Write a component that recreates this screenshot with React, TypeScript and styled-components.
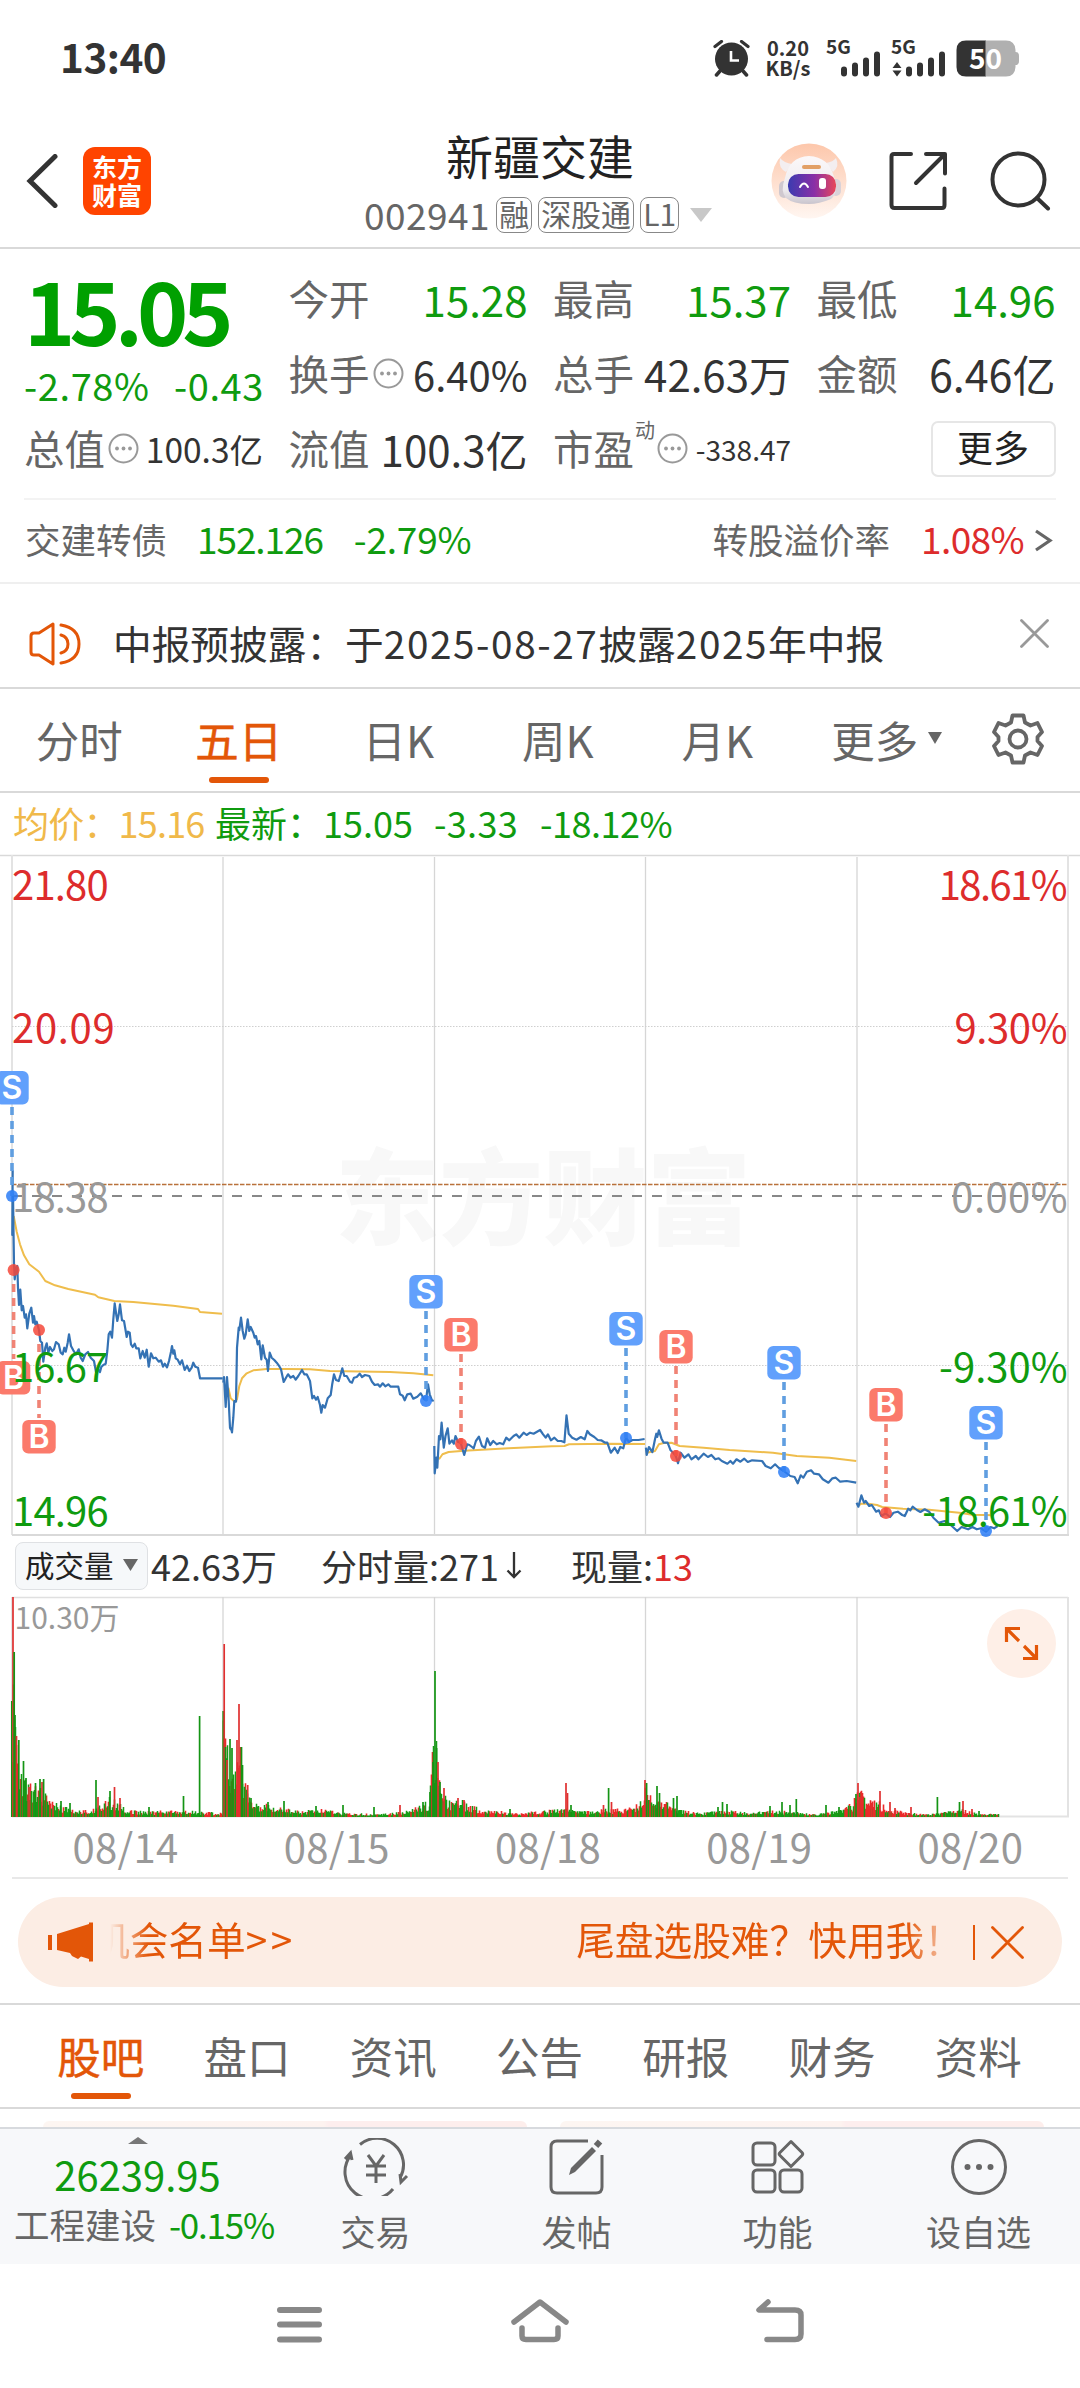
import React from "react";
import styled, { createGlobalStyle } from "styled-components";

const GREEN = "#0f9b0f";
const RED = "#dd2c2c";
const ORANGE = "#e35608";
const GREY = "#666";
const INK = "#333";
const LINE = "#d9d9d9";

const Global = createGlobalStyle`
  * { box-sizing: border-box; }
  body { margin: 0; background: #fff; }
  svg { display: block; flex: none; }
`;

const Screen = styled.main`
  width: 1080px;
  height: 2388px;
  display: flex;
  flex-direction: column;
  overflow: hidden;
  background: #fff;
  color: ${INK};
  font-family: "Noto Sans CJK SC", "Liberation Sans", sans-serif;
  line-height: 1;
  white-space: nowrap;
`;

/* ---------- status bar ---------- */

const StatusBar = styled.div`
  height: 116px;
  display: flex;
  align-items: center;
  justify-content: space-between;
  padding: 0 61px 0 60px;
`;
const Clock = styled.div`
  padding-bottom: 3px;
  font-size: 40.5px;
  font-weight: 700;
  letter-spacing: -0.5px;
`;
const StatusIcons = styled.div`
  display: flex;
  align-items: center;
`;
const NetSpeed = styled.div`
  width: 50px;
  margin: -1px 14px 0 12px;
  text-align: center;
  font: 700 20px/20px "Noto Sans CJK SC", sans-serif;
`;
const Signal = styled.div<{ $gap: number }>`
  margin-right: ${(p) => p.$gap}px;
`;
const GlyphSvg = styled.svg`
  overflow: visible;
`;

/* ---------- header ---------- */

const Header = styled.header`
  height: 133px;
  display: grid;
  grid-template-columns: 320px 440px 320px;
  border-bottom: 2px solid ${LINE};
`;
const HeaderLeft = styled.div`
  display: flex;
  align-items: center;
  gap: 25px;
  padding: 0 0 2px 26px;
`;
const Logo = styled.div`
  width: 68px;
  height: 68px;
  border-radius: 12px;
  background: #ff4400;
  color: #fff;
  font-size: 25px;
  font-weight: 700;
  line-height: 28px;
  text-align: center;
  padding-top: 5px;
`;
const HeaderTitle = styled.div`
  display: flex;
  flex-direction: column;
  align-items: center;
`;
const StockName = styled.h1`
  margin: 15px 0 0;
  font-size: 47px;
  font-weight: 400;
  line-height: 47px;
  color: #222;
`;
const CodeRow = styled.div`
  display: flex;
  align-items: center;
  gap: 6px;
  height: 36px;
  margin-top: 19px;
  margin-left: -4px;
`;
const Code = styled.span`
  padding-bottom: 2px;
  font-size: 37px;
  color: ${GREY};
  letter-spacing: 0.5px;
`;
const Tag = styled.span`
  height: 36px;
  padding: 0 2px;
  border: 1.5px solid #888;
  border-radius: 8px;
  font-size: 30px;
  line-height: 31px;
  color: ${GREY};
`;
const CodeArrow = styled.span`
  margin-left: 5px;
`;
const HeaderRight = styled.div`
  display: flex;
  align-items: center;
  padding: 0 29px 1px 11px;
  justify-content: space-between;
`;

/* ---------- quote ---------- */

const Quote = styled.section`
  height: 251px;
  margin: 0 24px;
  padding-top: 12px;
  display: grid;
  grid-template-columns: 239px 239px 238px 239px;
  grid-template-rows: 75px 75px 75px;
  column-gap: 25.5px;
  border-bottom: 2px solid #f3f3f3;
`;
const PriceBlock = styled.div`
  grid-row: span 2;
  color: ${GREEN};
`;
const Price = styled.div`
  margin-top: 4px;
  font-size: 87px;
  font-weight: 700;
  line-height: 87px;
  letter-spacing: -6px;
  color: #00a000;
`;
const Change = styled.div`
  display: flex;
  justify-content: space-between;
  margin: 13px -1px 0 0;
  font-size: 38px;
  line-height: 40px;
  letter-spacing: 0.6px;
`;
const Metric = styled.div`
  display: flex;
  align-items: center;
  justify-content: space-between;
`;
const MetricLabel = styled.span`
  display: flex;
  align-items: center;
  gap: 3px;
  font-size: 40.5px;
  color: ${GREY};
`;
const MetricValue = styled.span<{ $color?: string; $size?: number }>`
  font-size: ${(p) => p.$size ?? 42}px;
  color: ${(p) => p.$color ?? INK};
`;
const Raised = styled.sup`
  align-self: flex-start;
  margin: -8px -1px 0 -2px;
  font-size: 20px;
  line-height: 20px;
`;
const MoreButton = styled.button`
  justify-self: end;
  align-self: center;
  width: 125px;
  height: 56px;
  padding: 0 0 6px;
  border: 2px solid #e6e6e6;
  border-radius: 7px;
  background: #fff;
  color: #222;
  font: 400 36px/1 "Noto Sans CJK SC", sans-serif;
`;
const BondRow = styled.section`
  height: 84px;
  display: flex;
  align-items: center;
  padding: 0 26px 5px 25px;
  font-size: 35.5px;
  color: ${GREY};
  border-bottom: 2px solid #efefef;
`;
const BondValue = styled.span<{ $color: string; $left: number; $track?: number }>`
  margin-left: ${(p) => p.$left}px;
  font-size: 37px;
  letter-spacing: ${(p) => p.$track ?? 0}px;
  color: ${(p) => p.$color};
`;
const BondArrow = styled.div`
  padding-top: 4px;
  margin-left: 4px;
`;
const Spacer = styled.div`
  flex: 1;
`;

/* ---------- notice ---------- */

const Notice = styled.section`
  height: 105px;
  display: flex;
  align-items: center;
  padding: 17px 31px 0 28px;
  border-bottom: 2px solid ${LINE};
  font-size: 38.7px;
`;
const NoticeText = styled.span`
  margin: -4px 0 0 31px;
  flex: 1;
`;
const Wide = styled.span`
  letter-spacing: 1.6px;
`;
const NoticeClose = styled.div`
  align-self: flex-start;
  margin-top: 18px;
`;

/* ---------- tabs ---------- */

const Tabs = styled.nav<{ $pad: number }>`
  height: 104px;
  display: flex;
  padding: 0 ${(p) => p.$pad}px;
  border-bottom: 2px solid ${LINE};
`;
const Tab = styled.div<{ $active?: boolean; $shift?: number }>`
  flex: 1 1 0;
  min-width: 0;
  display: flex;
  flex-direction: column;
  align-items: center;
  justify-content: flex-end;
  gap: 12px;
  padding: 0 0 8px ${(p) => p.$shift ?? 0}px;
  font-size: 43.5px;
  color: ${(p) => (p.$active ? ORANGE : GREY)};
  -webkit-text-stroke: ${(p) => (p.$active ? "0.5px" : "0")};
  &::after {
    content: "";
    width: 60px;
    height: 6px;
    border-radius: 3px;
    background: ${(p) => (p.$active ? ORANGE : "transparent")};
  }
`;
const TabLabel = styled.div<{ $indent?: number }>`
  display: flex;
  align-items: center;
  gap: 10px;
  height: 50px;
  margin-left: ${(p) => p.$indent ?? -1}px;
`;
const TabArrow = styled.span`
  padding-bottom: 4px;
`;
const GearTab = styled.div`
  width: 123px;
  padding: 24px 0 0 35px;
`;

/* ---------- chart ---------- */

const Legend = styled.div`
  height: 62px;
  display: flex;
  align-items: center;
  padding: 0 0 5px 13px;
  font-size: 36px;
  color: ${GREEN};
`;
const LegendItem = styled.span<{ $color?: string; $width: number; $track?: number }>`
  width: ${(p) => p.$width}px;
  letter-spacing: ${(p) => p.$track ?? 0}px;
  color: ${(p) => p.$color ?? GREEN};
`;
const ChartSvg = styled.svg`
  overflow: visible;
  font-family: "Noto Sans CJK SC", "Liberation Sans", sans-serif;
`;
const VolumeBar = styled.div`
  height: 62px;
  display: flex;
  align-items: center;
  padding: 0 0 0 15px;
  font-size: 36px;
`;
const IndicatorPill = styled.div`
  display: flex;
  align-items: center;
  gap: 9px;
  width: 133px;
  height: 48px;
  margin-right: 3px;
  padding: 0 0 2px 9px;
  border: 1px solid #dfe1e4;
  border-radius: 8px;
  background: #f6f8fa;
  color: #222;
  font-size: 29.5px;
`;
const VolumeItem = styled.span<{ $width: number }>`
  display: flex;
  align-items: center;
  gap: 7px;
  width: ${(p) => p.$width}px;
  padding-bottom: 2px;
`;
const Up = styled.span`
  margin-left: -7px;
  color: ${RED};
`;
const VolumeArea = styled.div`
  position: relative;
  height: 221px;
`;
const ExpandButton = styled.div`
  position: absolute;
  right: 24px;
  top: 12px;
  width: 69px;
  height: 69px;
  border-radius: 50%;
  background: #feefe7;
  display: grid;
  place-items: center;
`;
const Dates = styled.div`
  height: 61px;
  margin: 0 12px;
  display: grid;
  grid-template-columns: repeat(5, 1fr);
  align-items: center;
  padding-bottom: 3px;
  border-bottom: 2px solid #e8e8e8;
  text-align: center;
  font-size: 40px;
  letter-spacing: 0.3px;
  color: #999;
`;
const DateCell = styled.span`
  padding-left: 16px;
`;

/* ---------- banner ---------- */

const BannerWrap = styled.div`
  height: 126px;
  padding: 18px 18px 0;
  border-bottom: 2px solid ${LINE};
`;
const Banner = styled.div`
  height: 90px;
  border-radius: 45px;
  background: #fcede4;
  display: flex;
  align-items: center;
  padding: 0 38px 0 30px;
  color: ${ORANGE};
  font-size: 38.7px;
`;
const Marquee = styled.div`
  width: 837px;
  margin-left: 16px;
  height: 60px;
  padding-bottom: 7px;
  display: flex;
  justify-content: space-between;
  align-items: center;
  overflow: hidden;
  mask-image: linear-gradient(90deg, transparent 0px, #000 38px, #000 796px, transparent 850px);
`;
const MarqueeTail = styled.span`
  margin-left: -19px;
`;
const Chevrons = styled.span`
  letter-spacing: 3.5px;
`;
const MarqueeHead = styled.span`
  margin-right: -17px;
`;
const BannerDivider = styled.div`
  width: 2px;
  height: 35px;
  margin: 0 16px 0 27px;
  background: ${ORANGE};
`;

/* ---------- feed peek + bottom bar ---------- */

const FeedPeek = styled.div`
  height: 18px;
  display: flex;
  align-items: flex-end;
  justify-content: space-between;
  padding: 0 36px 0 43px;
`;
const FeedCard = styled.div`
  width: 484px;
  height: 6px;
  border-radius: 14px 14px 0 0;
  background: linear-gradient(90deg, #fdf6f2 0, #fdf3f0 58%, #fdeeee 59%, #fdeeec 100%);
`;
const BottomBar = styled.footer`
  height: 137px;
  display: grid;
  grid-template-columns: 275px repeat(4, 201px);
  background: #f7f8fa;
  border-top: 2px solid #d7dade;
`;
const IndexBlock = styled.div`
  display: flex;
  flex-direction: column;
  align-items: center;
  padding-top: 8px;
`;
const IndexValue = styled.div`
  margin-top: 8px;
  font-size: 40px;
  line-height: 44px;
  color: ${GREEN};
`;
const IndexName = styled.div`
  display: flex;
  gap: 13px;
  margin: 8px 0 0 13px;
  font-size: 35.5px;
  line-height: 40px;
  color: ${GREY};
`;
const IndexChange = styled.span`
  font-size: 35px;
  color: ${GREEN};
  letter-spacing: -1.2px;
`;
const Action = styled.div`
  display: flex;
  flex-direction: column;
  align-items: center;
  padding-top: 9px;
  gap: 17px;
  font-size: 35px;
  color: ${GREY};
`;
const SystemNav = styled.nav`
  flex: 1;
  display: flex;
  justify-content: center;
  padding-top: 33px;
  gap: 182px;
`;

/* ---------- data ---------- */

type Pt = [number, number];

/* Early sessions are digitised on a 3x grid, the later ones on a 2.306 x 3 grid. */
const early = (p: Pt[]) => p.map(([x, y]) => `${(x / 3).toFixed(1)},${(1160 + y / 3).toFixed(1)}`).join(" ");
const late = (p: Pt[]) => p.map(([x, y]) => `${(400 + x / 2.306).toFixed(1)},${(1240 + y / 3).toFixed(1)}`).join(" ");

const price: string[] = [
  early([[38,28],[37,222],[39,100],[41,250],[42,310],[44,355],[48,320],[52,315],[54,380],[57,432],[61,386],[65,448],[69,435],[74,470],[78,460],[82,502],[88,458],[94,440],[99,485],[102,465],[106,490],[110,482],[117,507],[121,540],[126,545],[130,602],[136,560],[140,547],[145,575],[150,558],[157,570],[162,565],[168,543],[176,550],[182,575],[188,580],[193,560],[197,572],[203,545],[207,520],[213,555],[220,568],[228,580],[236,565],[242,590],[248,600],[256,580],[264,573],[272,590],[282,600],[288,633],[294,625],[300,633],[304,618],[310,612],[317,608],[322,570],[326,520],[331,512],[336,530],[340,475],[344,427],[349,462],[352,480],[356,460],[360,430],[366,478],[372,480],[378,515],[380,528],[384,512],[389,515],[393,550],[398,558],[404,548],[409,562],[416,562],[421,592],[428,570],[434,590],[440,566],[446,617],[453,577],[460,592],[467,590],[476,602],[483,598],[489,617],[494,608],[501,619],[507,600],[513,572],[516,555],[520,578],[523,568],[527,592],[533,596],[540,610],[546,598],[554,627],[561,614],[568,630],[575,620],[580,605],[586,617],[594,620],[600,652],[668,652]]),
  early([[670,665],[672,648],[677,738],[681,648],[686,720],[690,800],[692,805],[694,803],[696,814],[700,770],[703,720],[708,722],[711,560],[716,500],[718,508],[723,470],[728,510],[733,533],[737,520],[743,475],[748,510],[752,498],[760,515],[764,530],[768,525],[773,550],[778,540],[784,595],[788,553],[795,590],[800,596],[804,630],[809,575],[815,590],[823,597],[830,605],[836,613],[843,625],[851,663],[858,650],[864,640],[872,650],[880,645],[887,656],[895,645],[906,627],[913,640],[920,640],[930,660],[937,712],[942,705],[948,716],[953,708],[960,732],[964,755],[968,732],[975,740],[983,712],[992,702],[997,668],[1002,640],[1008,657],[1016,660],[1022,640],[1027,622],[1033,645],[1040,645],[1050,662],[1056,665],[1062,650],[1070,648],[1079,638],[1086,648],[1095,642],[1108,645],[1116,662],[1124,672],[1134,670],[1140,677],[1148,667],[1156,676],[1165,670],[1172,677],[1195,677],[1200,700],[1208,704],[1214,718],[1222,700],[1232,698],[1240,713],[1252,707],[1262,697],[1272,714],[1278,718],[1284,670],[1289,700],[1296,718],[1301,720]]),
  late([[79,615],[80,697],[84,650],[86,680],[90,585],[93,595],[96,545],[101,620],[105,585],[110,562],[114,608],[120,598],[124,608],[128,585],[134,603],[140,605],[148,642],[155,610],[160,612],[166,618],[170,622],[175,600],[182,587],[189,615],[196,620],[201,592],[208,612],[215,600],[223,610],[230,606],[238,610],[245,590],[252,598],[262,585],[268,580],[275,590],[285,575],[292,582],[300,575],[308,578],[315,573],[323,567],[330,580],[336,590],[341,580],[348,598],[356,590],[364,600],[372,600],[379,604],[384,523],[389,578],[397,590],[407,596],[417,588],[426,595],[432,570],[438,580],[448,588],[456,597],[464,598],[473,605],[478,605],[486,635],[495,620],[502,636],[508,618],[515,622],[521,590],[528,603],[536,597],[550,597],[564,594]]),
  late([[567,620],[569,642],[574,618],[582,633],[588,595],[591,578],[593,588],[597,568],[603,593],[608,605],[617,605],[624,628],[630,635],[636,645],[641,667],[647,635],[656,650],[665,640],[672,655],[682,645],[688,655],[700,638],[710,648],[718,642],[727,655],[735,652],[742,660],[755,668],[762,660],[768,668],[776,655],[785,662],[794,653],[802,663],[812,658],[835,660],[843,675],[855,682],[865,670],[873,680],[885,690],[900,705],[910,708],[917,727],[924,703],[930,710],[938,692],[948,688],[955,698],[966,700],[975,715],[988,725],[997,712],[1005,710],[1015,722],[1030,720],[1052,725]]),
  late([[1053,785],[1057,797],[1064,763],[1070,785],[1074,780],[1082,795],[1088,792],[1098,812],[1104,808],[1110,825],[1120,817],[1130,828],[1138,815],[1148,812],[1158,822],[1164,825],[1172,803],[1177,808],[1182,797],[1192,807],[1200,813],[1210,805],[1220,812],[1230,830],[1242,845],[1256,840],[1270,852],[1285,870],[1295,858],[1310,865],[1320,858],[1330,865],[1340,862],[1351,872],[1362,858],[1370,862],[1378,855]]),
];

const average: string[] = [
  early([[41,165],[50,212],[60,250],[72,283],[88,310],[117,332],[136,360],[165,373],[205,384],[285,401],[295,409],[343,420],[400,423],[520,434],[594,444],[600,453],[666,458]]),
  early([[685,680],[692,712],[704,722],[711,715],[718,675],[726,652],[740,637],[760,628],[800,624],[860,624],[930,625],[990,630],[1170,633],[1240,637],[1300,643]]),
  late([[90,655],[98,640],[112,633],[148,629],[250,622],[350,616],[379,615],[390,610],[480,608],[565,609]]),
  late([[569,635],[588,630],[597,610],[608,606],[626,605],[645,615],[700,620],[760,627],[860,635],[915,645],[990,650],[1052,660]]),
  late([[1058,793],[1064,788],[1080,788],[1100,792],[1112,798],[1160,803],[1220,806],[1290,815],[1320,821],[1370,823]]),
];

type Trade = { side: "B" | "S"; x: number; top: number; dot: number };
const trades: Trade[] = [
  { side: "S", x: 12, top: 1070, dot: 1195 },
  { side: "B", x: 13.6, top: 1360, dot: 1269 },
  { side: "B", x: 39, top: 1419, dot: 1329 },
  { side: "S", x: 426, top: 1274, dot: 1400 },
  { side: "B", x: 461, top: 1317, dot: 1443 },
  { side: "S", x: 626, top: 1311, dot: 1437 },
  { side: "B", x: 676, top: 1329, dot: 1455 },
  { side: "S", x: 784, top: 1345, dot: 1471 },
  { side: "B", x: 886, top: 1387, dot: 1512 },
  { side: "S", x: 986, top: 1405, dot: 1530 },
];

/* Typical volume height along the time axis; single trades spike above it. */
const envelope: Pt[] = [[12,110],[14,75],[17,45],[22,34],[30,24],[38,22],[44,18],[52,11],[62,8],[78,5],[95,6],[108,14],[118,12],[125,5],[150,4],[175,5],[200,4],[222,3],[223,80],[228,45],[234,30],[240,50],[246,22],[256,11],[275,8],[300,4],[320,6],[345,3],[380,2],[410,5],[428,12],[435,70],[440,26],[447,12],[460,13],[470,8],[490,5],[520,3],[545,5],[570,6],[590,4],[604,6],[625,6],[642,12],[646,24],[652,14],[662,12],[680,5],[700,3],[725,5],[750,3],[770,5],[790,4],[815,2],[838,5],[852,10],[859,22],[866,12],[878,12],[888,6],[910,3],[930,2],[948,4],[962,6],[975,3],[999,2]];
const spikes: [number, number, 0 | 1][] = [
  [11.8,116,1],[13,220,0],[14.2,165,1],[15,102,1],[16.5,81,0],[18.8,77,1],[23.5,56,1],[26,39,1],[29,30,0],[35.5,34,1],[40,38,1],[42,35,0],[43.6,38,1],[61,16,1],[70,14,1],[96,37,1],[98,20,0],[110,26,1],[114.5,30,0],[120,19,0],[149,10,1],[183.5,21,1],[199.6,101,1],
  [223.2,106,1],[224.2,173,0],[225.5,70,1],[227,57,0],[230,78,1],[232,69,1],[237,77,0],[239,113,0],[241.5,70,1],[242.5,52,1],[247.7,32,0],[251,19,1],[268,15,1],[284,16,1],[316,11,1],[343,12,1],[374,10,1],[400,12,0],[423,15,1],[430,25,1],[433,55,1],[435,146,1],[436.6,69,1],[438,55,0],[440,35,1],[444,29,0],[458,19,0],[464,17,0],[510,8,1],
  [566,34,0],[567.5,24,0],[571,12,1],[603.5,12,0],[608.6,29,1],[611.5,15,0],[645,37,0],[646.6,34,1],[657,31,1],[659.5,24,1],[673.5,19,1],[677,21,1],[718,10,1],[722.5,15,1],[727,13,1],[770,11,1],[782,15,1],[790,12,1],[796.3,18,1],[826,12,1],[839,10,1],[856,23,1],[858,34,0],[860,20,0],[871.5,14,0],[880,26,0],[890,15,0],[895,9,0],[911,10,0],[937.4,20,1],[959.5,15,1],[963,16,0],[972,8,0],[979,6,1],
];

function heightAt(x: number) {
  for (let i = 1; i < envelope.length; i++) {
    const [x0, h0] = envelope[i - 1];
    const [x1, h1] = envelope[i];
    if (x <= x1) return h0 + ((h1 - h0) * (x - x0)) / (x1 - x0 || 1);
  }
  return 0;
}
const redRuns: Pt[] = [[30, 34], [96, 121], [160, 190], [200, 222], [233, 241], [462, 545], [560, 568], [600, 670], [845, 912], [965, 999]];
function buildVolume() {
  const paths = ["", ""];
  let seed = 41;
  const rand = () => {
    seed = (seed * 16807) % 2147483647;
    return seed / 2147483647;
  };
  for (let x = 12; x < 999; x += 1) {
    const h = Math.max(1.5, heightAt(x) * (0.5 + rand() * 0.95));
    const redShare = redRuns.some(([a, b]) => x >= a && x <= b) ? 0.65 : 0.35;
    paths[rand() > redShare ? 1 : 0] += `M${x + 0.5} 1817V${(1817 - h).toFixed(1)}`;
  }
  return paths;
}
const [redVolume, greenVolume] = buildVolume();
const dayLines = [223, 434.5, 645.5, 857];

type AxisLabel = { text: string; y: number; fill: string; track: number };
const leftAxis: AxisLabel[] = [
  { text: "21.80", y: 899, fill: RED, track: -0.8 },
  { text: "20.09", y: 1042, fill: RED, track: 0.7 },
  { text: "18.38", y: 1211, fill: "#999", track: -0.8 },
  { text: "16.67", y: 1381, fill: GREEN, track: -0.9 },
  { text: "14.96", y: 1524.5, fill: GREEN, track: -0.8 },
];
const rightAxis: AxisLabel[] = [
  { text: "18.61%", y: 899, fill: RED, track: -1.6 },
  { text: "9.30%", y: 1042, fill: RED, track: -0.4 },
  { text: "0.00%", y: 1211, fill: "#999", track: 0.4 },
  { text: "-9.30%", y: 1381, fill: GREEN, track: 0 },
  { text: "-18.61%", y: 1524.5, fill: GREEN, track: -0.9 },
];

const PriceChart = () => (
  <ChartSvg width="1080" height="680" viewBox="0 854 1080 680">
    <text x="543" y="1236" textAnchor="middle" fontSize="104" fontWeight="900" fill="#f8f8f8">东方财富</text>
    <path d="M0 854.5H1080" stroke={LINE} strokeWidth="1.5" />
    <path d="M12 854V1534M1068 854V1534" stroke="#e3e3e3" strokeWidth="2" />
    {dayLines.map((x) => <path key={x} d={`M${x} 856V1534`} stroke="#d6d6d6" strokeWidth="1.3" />)}
    <path d="M12 1534H1069" stroke={LINE} strokeWidth="2" />
    <path d="M12 1025.5H1068M12 1364.5H1068" stroke="#cfcfcf" strokeDasharray="1.5 1.5" />
    <path d="M12 1183.5H1068" stroke="#b9713a" strokeWidth="1.3" strokeDasharray="4.5 1.5" />
    <path d="M12 1195H1068" stroke="#888" strokeWidth="2" strokeDasharray="10 10" />
    {average.map((p, i) => <polyline key={i} points={p} fill="none" stroke="#efbd4c" strokeWidth="2" strokeLinejoin="round" />)}
    {price.map((p, i) => <polyline key={i} points={p} fill="none" stroke="#3472b4" strokeWidth="2.2" strokeLinejoin="round" />)}
    {trades.map((t) => {
      const buy = t.side === "B";
      const below = t.top > t.dot;
      return (
        <g key={`${t.side}${t.x}`}>
          <path
            d={below ? `M${t.x} ${t.dot + 14}V${t.top - 2}` : `M${t.x} ${t.top + 36}V${t.dot}`}
            stroke={buy ? "#f08375" : "#609ee0"} strokeWidth="3.6" strokeDasharray="8 6"
          />
          <circle cx={t.x} cy={t.dot} r="6" fill={buy ? "#f5483a" : "#2b7cf6"} fillOpacity="0.85" />
          <rect x={t.x - 16.7} y={t.top} width="33.4" height="33.4" rx="6" fill={buy ? "#fb7a6b" : "#61a0fc"} />
          <text x={t.x} y={t.top + 28} textAnchor="middle" fontFamily="Inter, sans-serif" fontSize="32" fontWeight="600" fill="#fff">{t.side}</text>
        </g>
      );
    })}
    <g fontSize="40">
      {leftAxis.map((a) => <text key={a.text} x="12" y={a.y} fill={a.fill} letterSpacing={a.track}>{a.text}</text>)}
      <g textAnchor="end">
        {rightAxis.map((a) => <text key={a.text} x={1067.5 + a.track} y={a.y} fill={a.fill} letterSpacing={a.track}>{a.text}</text>)}
      </g>
    </g>
  </ChartSvg>
);

const VolumeChart = () => (
  <ChartSvg width="1080" height="221" viewBox="0 1597 1080 221">
    <path d="M12 1597.5H1068" stroke="#e0e0e0" strokeWidth="1.3" />
    <path d="M12 1597V1817M1068 1597V1817M12 1816.5H1069" stroke="#e3e3e3" strokeWidth="2" />
    {dayLines.map((x) => <path key={x} d={`M${x} 1597V1817`} stroke="#d6d6d6" strokeWidth="1.3" />)}
    <path d={redVolume} stroke="#ea2a2a" strokeWidth="1.6" />
    <path d={greenVolume} stroke="#169c16" strokeWidth="1.5" />
    {spikes.map(([x, h, up]) => (
      <path key={x} d={`M${x} 1817v${-h}`} stroke={up ? "#149414" : "#e03030"} strokeWidth="1.7" />
    ))}
    <text x="14.5" y="1629" fontSize="30" fill="#999">10.30万</text>
  </ChartSvg>
);

/* ---------- icons ---------- */

const DotsIcon = () => (
  <svg width="31" height="31" viewBox="0 0 31 31">
    <circle cx="15.5" cy="15.5" r="14" fill="none" stroke="#999" strokeWidth="2" />
    <g fill="#999"><circle cx="9" cy="15.5" r="1.9" /><circle cx="15.5" cy="15.5" r="1.9" /><circle cx="22" cy="15.5" r="1.9" /></g>
  </svg>
);
const Triangle = ({ w, h, fill, up }: { w: number; h: number; fill: string; up?: boolean }) => (
  <svg width={w} height={h}><path d={up ? `M0 ${h}H${w}L${w / 2} 0Z` : `M0 0H${w}L${w / 2} ${h}Z`} fill={fill} /></svg>
);
const Cross = ({ size, color }: { size: number; color: string }) => (
  <svg width={size} height={size}><path d={`M1.5 1.5L${size - 1.5} ${size - 1.5}M${size - 1.5} 1.5L1.5 ${size - 1.5}`} stroke={color} strokeWidth="2.8" strokeLinecap="round" /></svg>
);
const AlarmIcon = () => (
  <svg width="38" height="37" viewBox="0 0 38 37" fill="none" stroke={INK}>
    <circle cx="18.5" cy="19" r="16.5" fill={INK} stroke="none" />
    <path d="M2 6.5L8.5 1.5M35 6.5L28.5 1.5" strokeWidth="3.2" strokeLinecap="round" />
    <path d="M7 31L3.5 35M30 31L33.5 35" strokeWidth="3.5" strokeLinecap="round" />
    <path d="M18 11V20.5H26" stroke="#fff" strokeWidth="2.6" />
  </svg>
);
const SignalIcon = ({ arrows }: { arrows?: boolean }) => (
  <GlyphSvg width="54" height="37" viewBox="0 0 54 37">
    <text x="-1" y="14" fontSize="19" fontWeight="700" fill={INK} fontFamily="Noto Sans CJK SC, sans-serif">5G</text>
    <g stroke={INK} strokeWidth="6" strokeLinecap="round"><path d="M17 29.5V33.5M28 25.5V33.5M39 20.500V33.5M50 14.500V33.5" /></g>
    {arrows && <path d="M5 22L9.500 28H0.500ZM5 36.500L9.500 30.500H0.500Z" fill={INK} />}
  </GlyphSvg>
);
const BatteryIcon = () => (
  <GlyphSvg width="63" height="37" viewBox="0 0 63 37">
    <path d="M10 0.500H30V36.500H10Q0.500 36.500 0.500 27V10Q0.500 0.500 10 0.500Z" fill={INK} />
    <path d="M29.500 0.500H50Q59 0.500 59.500 10V12Q63 12 63 16V21Q63 25 59.500 25V27Q59 36.500 50 36.500H29.500Z" fill="#b0b0b0" />
    <text x="29.500" y="28.5" textAnchor="middle" fontSize="28" fontWeight="700" fill="#fff" fontFamily="Noto Sans CJK SC, sans-serif">50</text>
  </GlyphSvg>
);
const BackIcon = () => (
  <svg width="32" height="54" viewBox="0 0 32 54"><path d="M29 2.500L4 27L29 51.500" fill="none" stroke={INK} strokeWidth="5" strokeLinecap="round" /></svg>
);
const RobotIcon = () => (
  <svg width="76" height="76" viewBox="0 0 76 76">
    <defs>
      <linearGradient id="halo" x1="0" y1="0" x2="0" y2="1"><stop offset="0" stopColor="#fdc7ab" /><stop offset="1" stopColor="#fff6f1" /></linearGradient>
      <linearGradient id="visor"><stop offset="0" stopColor="#3b3bb0" /><stop offset="0.55" stopColor="#8a2fa6" /><stop offset="1" stopColor="#e8485a" /></linearGradient>
      <linearGradient id="shell" x1="0" y1="0" x2="0" y2="1"><stop offset="0" stopColor="#fbf8f9" /><stop offset="0.7" stopColor="#eeebee" /><stop offset="1" stopColor="#c9c4cd" /></linearGradient>
    </defs>
    <circle cx="38" cy="38" r="37.500" fill="url(#halo)" />
    <rect x="8" y="38" width="10" height="17" rx="5" fill="#cfc8cf" />
    <rect x="60" y="36" width="10" height="17" rx="5" fill="#d9d2d8" />
    <path d="M9 15Q7 25 15 29L21 21Q13 20 9 15ZM65 15Q69 24 62 29L55 20Q62 19 65 15Z" fill="#f3eef0" />
    <path d="M14 35Q18 14 38 13Q58 14 63 34Q68 50 60 56Q48 61 38 61Q22 61 15 55Q9 48 14 35Z" fill="url(#shell)" />
    <rect x="31" y="22" width="19" height="4" rx="2" fill="#e2a066" />
    <rect x="17" y="31" width="48" height="23" rx="10.500" fill="url(#visor)" />
    <path d="M29 44Q33 37 37 44" fill="none" stroke="#fff" strokeWidth="2" strokeLinecap="round" />
    <rect x="48" y="35" width="7" height="11" rx="3" fill="#fff" />
  </svg>
);
const ShareIcon = () => (
  <svg width="60" height="60" viewBox="0 0 60 60" fill="none" stroke={INK} strokeWidth="4" strokeLinecap="round" strokeLinejoin="round">
    <path d="M22 3H5Q2.500 3 2.500 5.500V54Q2.500 57 5.500 57H53Q55.500 57 55.500 54V37.500M37 3H56V22.500M55 4L27 32" />
  </svg>
);
const SearchIcon = () => (
  <svg width="61" height="60" viewBox="0 0 61 60" fill="none" stroke={INK} strokeWidth="4" strokeLinecap="round">
    <circle cx="28.500" cy="28.500" r="26" /><path d="M47 47L58 57.500" />
  </svg>
);
const SpeakerIcon = () => (
  <svg width="54" height="44" viewBox="0 0 54 44" fill="none" stroke={ORANGE} strokeWidth="3" strokeLinecap="round" strokeLinejoin="round">
    <path d="M25 2L11 11H6Q3 11 3 14V30Q3 33 6 33H11L25 42ZM33 13Q40 15 40 22Q40 29 33 31M33 3Q51 6 51 22Q51 38 33 41" />
  </svg>
);
const GearIcon = () => (
  <svg width="52" height="52" viewBox="0 0 52 52" fill="none" stroke={GREY} strokeWidth="3.800" strokeLinejoin="round">
    <path d="M20.500 2.500H31.500L33 9.500L38.500 12.500L45.500 10L50 19L45.500 24V28L50 33L45.500 42L38.500 39.500L33 42.500L31.500 49.500H20.500L19 42.500L13.500 39.500L6.500 42L2 33L6.500 28V24L2 19L6.500 10L13.500 12.500L19 9.500Z" />
    <circle cx="26" cy="26" r="8.500" />
  </svg>
);
const ArrowDown = () => (
  <svg width="16" height="30" viewBox="0 0 16 30" fill="none" stroke={INK} strokeWidth="2.300"><path d="M8 2V27M1.500 20.500L8 27L14.500 20.500" /></svg>
);
const ExpandIcon = () => (
  <svg width="35" height="35" viewBox="0 0 35 35" fill="none" stroke={ORANGE} strokeWidth="3.200">
    <path d="M16 2.500H2.500V16M3 3L15 15M19 32.500H32.500V19M32 32L20 20" />
  </svg>
);
const Megaphone = () => (
  <svg width="46" height="40" viewBox="0 0 46 40" fill={ORANGE}>
    <path d="M0 13H4V28H0ZM9 12L41 2V0.500H45V39.500H41V37L33 34.500L30 37L24 34L22 31L9 28Z" />
  </svg>
);
const icon = { width: 58, height: 58, viewBox: "0 0 58 58", fill: "none", stroke: GREY, strokeWidth: 3 } as const;
const TradeIcon = () => (
  <svg {...icon} width={66} viewBox="-4 0 66 58">
    <path d="M13 6.500A26.500 26.500 0 0 1 53 40M46 51A26.500 26.500 0 0 1 4 17M-2 21L3.500 15L5 22M60 38L54 44L53 36" />
    <path d="M21 17L29 28L37 17M19 28H39M19 37H39M29 28V45" />
  </svg>
);
const PostIcon = () => (
  <svg {...icon}>
    <path d="M40 3H9Q3 3 3 9V49Q3 55 9 55H48Q54 55 54 49V17" />
    <path d="M21 37L23 30L44 9L48 13L27 34Z" fill={GREY} stroke="none" /><path d="M48 8L52 3.500" strokeWidth="6" />
  </svg>
);
const FeatureIcon = () => (
  <svg {...icon}>
    <rect x="4" y="5" width="22" height="22" rx="4" /><rect x="4" y="32" width="22" height="22" rx="4" /><rect x="31" y="32" width="22" height="22" rx="4" />
    <path d="M42 3.500L53 14.500Q54.500 16 53 17.500L42 28.500L31 17.500Q29.500 16 31 14.500Z" strokeLinejoin="round" />
  </svg>
);
const WatchIcon = () => (
  <svg {...icon}>
    <circle cx="29" cy="29" r="26.500" /><g fill={GREY} stroke="none"><circle cx="17.500" cy="29" r="3" /><circle cx="29" cy="29" r="3" /><circle cx="40.500" cy="29" r="3" /></g>
  </svg>
);

/* ---------- page ---------- */

type MetricProps = { label: string; value: string; color?: string; size?: number; dots?: boolean; sup?: string };
const QuoteMetric = ({ label, value, color, size, dots, sup }: MetricProps) => (
  <Metric>
    <MetricLabel>{label}{sup && <Raised>{sup}</Raised>}{dots && <DotsIcon />}</MetricLabel>
    <MetricValue $color={color} $size={size}>{value}</MetricValue>
  </Metric>
);

const actions = [
  { label: "交易", Icon: TradeIcon },
  { label: "发帖", Icon: PostIcon },
  { label: "功能", Icon: FeatureIcon },
  { label: "设自选", Icon: WatchIcon },
];

export default function App() {
  return (
    <Screen>
      <Global />
      <StatusBar>
        <Clock>13:40</Clock>
        <StatusIcons>
          <AlarmIcon />
          <NetSpeed>0.20<br />KB/s</NetSpeed>
          <Signal $gap={11}><SignalIcon /></Signal>
          <Signal $gap={10}><SignalIcon arrows /></Signal>
          <BatteryIcon />
        </StatusIcons>
      </StatusBar>

      <Header>
        <HeaderLeft><BackIcon /><Logo>东方<br />财富</Logo></HeaderLeft>
        <HeaderTitle>
          <StockName>新疆交建</StockName>
          <CodeRow>
            <Code>002941</Code><Tag>融</Tag><Tag>深股通</Tag><Tag>L1</Tag>
            <CodeArrow><Triangle w={22} h={14} fill="#c8c8c8" /></CodeArrow>
          </CodeRow>
        </HeaderTitle>
        <HeaderRight><RobotIcon /><ShareIcon /><SearchIcon /></HeaderRight>
      </Header>

      <Quote>
        <PriceBlock>
          <Price>15.05</Price>
          <Change><span>-2.78%</span><span>-0.43</span></Change>
        </PriceBlock>
        <QuoteMetric label="今开" value="15.28" color={GREEN} />
        <QuoteMetric label="最高" value="15.37" color={GREEN} />
        <QuoteMetric label="最低" value="14.96" color={GREEN} />
        <QuoteMetric label="换手" value="6.40%" dots size={40} />
        <QuoteMetric label="总手" value="42.63万" size={42} />
        <QuoteMetric label="金额" value="6.46亿" size={43} />
        <QuoteMetric label="总值" value="100.3亿" dots size={33.5} />
        <QuoteMetric label="流值" value="100.3亿" size={42} />
        <QuoteMetric label="市盈" value="-338.47" dots sup="动" size={28} />
        <MoreButton>更多</MoreButton>
      </Quote>
      <BondRow>
        交建转债
        <BondValue $color={GREEN} $left={30} $track={-1.1}>152.126</BondValue>
        <BondValue $color={GREEN} $left={31} $track={-0.2}>-2.79%</BondValue>
        <Spacer />
        转股溢价率
        <BondValue $color={RED} $left={31} $track={-0.6}>1.08%</BondValue>
        <BondArrow>
          <svg width="26" height="24"><path d="M8 2L22 11.500L8 21" fill="none" stroke={GREY} strokeWidth="3.2" /></svg>
        </BondArrow>
      </BondRow>

      <Notice>
        <SpeakerIcon />
        <NoticeText>中报预披露：于<Wide>2025-08-27</Wide>披露<Wide>2025</Wide>年中报</NoticeText>
        <NoticeClose><Cross size={29} color="#999" /></NoticeClose>
      </Notice>

      <Tabs $pad={0}>
        <Tab><TabLabel>分时</TabLabel></Tab>
        <Tab $active><TabLabel>五日</TabLabel></Tab>
        <Tab><TabLabel>日K</TabLabel></Tab>
        <Tab><TabLabel>周K</TabLabel></Tab>
        <Tab><TabLabel>月K</TabLabel></Tab>
        <Tab><TabLabel $indent={19}>更多<TabArrow><Triangle w={14} h={12} fill={GREY} /></TabArrow></TabLabel></Tab>
        <GearTab><GearIcon /></GearTab>
      </Tabs>

      <Legend>
        <LegendItem $color="#f0b94a" $width={202} $track={-0.8}>均价：15.16</LegendItem>
        <LegendItem $width={219}>最新：15.05</LegendItem>
        <LegendItem $width={106} $track={0.3}>-3.33</LegendItem>
        <LegendItem $width={140} $track={-0.5}>-18.12%</LegendItem>
      </Legend>
      <PriceChart />
      <VolumeBar>
        <IndicatorPill>成交量<Triangle w={15} h={12} fill={GREY} /></IndicatorPill>
        <VolumeItem $width={170}>42.63万</VolumeItem>
        <VolumeItem $width={250}>分时量:271<ArrowDown /></VolumeItem>
        <VolumeItem $width={140}>现量:<Up>13</Up></VolumeItem>
      </VolumeBar>
      <VolumeArea>
        <VolumeChart />
        <ExpandButton><ExpandIcon /></ExpandButton>
      </VolumeArea>
      <Dates>
        {["08/14", "08/15", "08/18", "08/19", "08/20"].map((d) => <DateCell key={d}>{d}</DateCell>)}
      </Dates>

      <BannerWrap>
        <Banner>
          <Megaphone />
          <Marquee>
            <MarqueeTail>机会名单<Chevrons>&gt;&gt;</Chevrons></MarqueeTail>
            <MarqueeHead>尾盘选股难？快用我！</MarqueeHead>
          </Marquee>
          <BannerDivider />
          <Cross size={33} color={ORANGE} />
        </Banner>
      </BannerWrap>

      <Tabs $pad={28}>
        {["股吧", "盘口", "资讯", "公告", "研报", "财务", "资料"].map((t, i) => (
          <Tab key={t} $active={i === 0}><TabLabel>{t}</TabLabel></Tab>
        ))}
      </Tabs>

      <FeedPeek><FeedCard /><FeedCard /></FeedPeek>
      <BottomBar>
        <IndexBlock>
          <Triangle w={20} h={7} fill="#777" up />
          <IndexValue>26239.95</IndexValue>
          <IndexName>工程建设<IndexChange>-0.15%</IndexChange></IndexName>
        </IndexBlock>
        {actions.map(({ label, Icon }) => <Action key={label}><Icon />{label}</Action>)}
      </BottomBar>
      <SystemNav>
        <svg width="60" height="48" viewBox="0 0 60 48" stroke="#888" strokeWidth="6" strokeLinecap="round"><path d="M12 13H51M12 27.500H51M12 42.500H51" /></svg>
        <svg width="60" height="48" viewBox="0 0 60 48" fill="none" stroke="#888" strokeWidth="5.500" strokeLinecap="round" strokeLinejoin="round"><path d="M4 25L30 5L56 25M12 31V39Q12 42.500 16 42.500H44Q48 42.500 48 39V31" /></svg>
        <svg width="60" height="48" viewBox="0 0 60 48" fill="none" stroke="#888" strokeWidth="5.500" strokeLinecap="round" strokeLinejoin="round"><path d="M16 5L7 13H43Q49 13 49 18V37Q49 42.500 43 42.500H15" /></svg>
      </SystemNav>
    </Screen>
  );
}
